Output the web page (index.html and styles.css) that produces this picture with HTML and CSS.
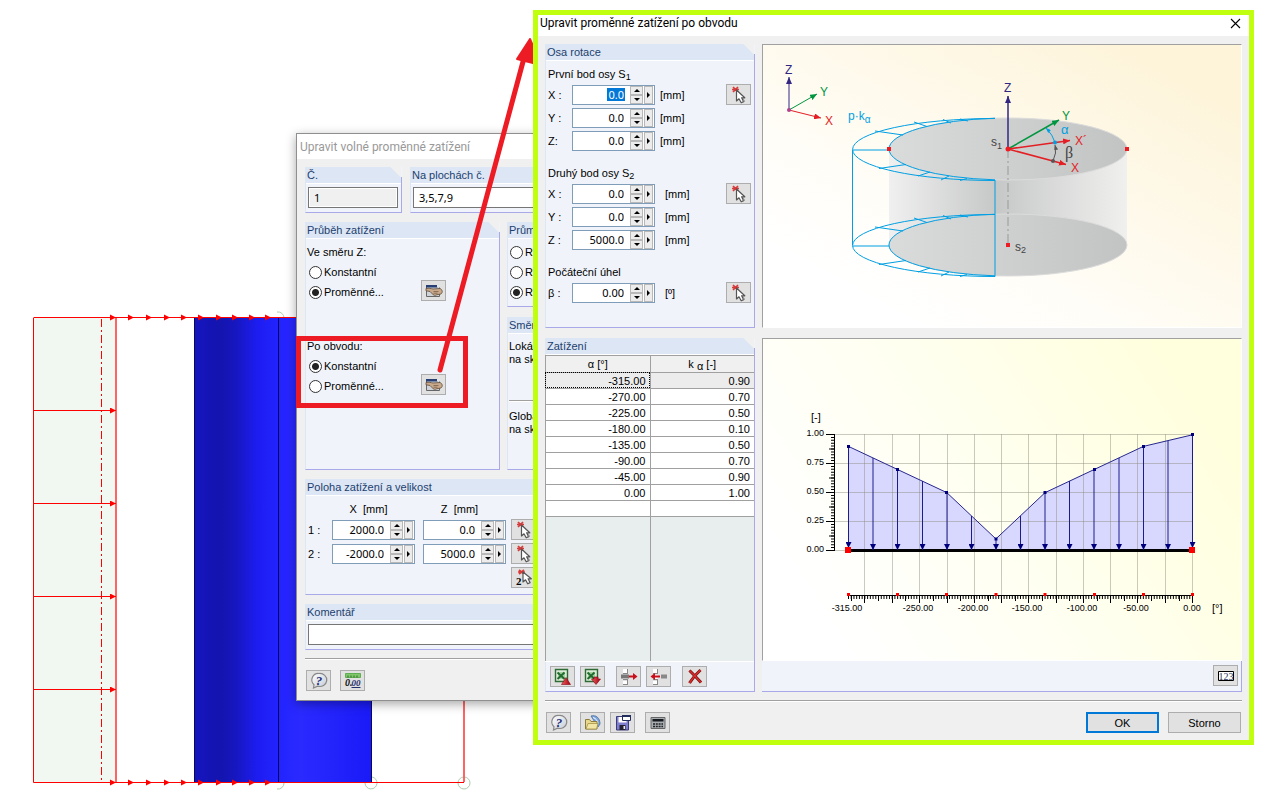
FILE: index.html
```html
<!DOCTYPE html>
<html lang="cs">
<head>
<meta charset="utf-8">
<title>Upravit proměnné zatížení po obvodu</title>
<link rel="stylesheet" href="styles.css">
</head>
<body>
<svg class="defs" aria-hidden="true">
  <defs>
    <linearGradient id="bubbleFill" x1="0" y1="0" x2="1" y2="1"><stop offset="0" stop-color="#fff"/><stop offset="1" stop-color="#c3cad6"/></linearGradient>
    <linearGradient id="redFill" x1="0" y1="0" x2="1" y2="0"><stop offset="0" stop-color="#f06060"/><stop offset="1" stop-color="#a00010"/></linearGradient>
    <symbol id="i-pick" viewBox="0 0 20 18">
      <path d="M4 1l5 5M9 1L4 6M3 3.500h7" stroke="#d83a3a" stroke-width="1.700" fill="none"/>
      <path d="M7.500 4v11l2.500-2.200 2.200 4 2.400-1.200-2-3.800h3.200z" fill="#fff" stroke="#555" stroke-width="1.200" stroke-linejoin="round"/>
      <path d="M14 12l2 3.200-1.500 1.300z" fill="#888"/>
    </symbol>
    <symbol id="i-pick2" viewBox="0 0 20 18">
      <path d="M5 1l5 4M10 1L5 5M4 3h7" stroke="#d83a3a" stroke-width="1.700" fill="none"/>
      <path d="M9 3v10l2.500-2.200 2.200 4 2.400-1.200-2-3.800h3.200z" fill="#fff" stroke="#555" stroke-width="1.200" stroke-linejoin="round"/>
      <text x="2" y="16" font-family="Liberation Serif, serif" font-weight="bold" font-size="11">2</text>
    </symbol>
    <symbol id="i-help" viewBox="0 0 20 18">
      <path d="M10 1.500a7 6.500 0 1 1-1.500 12.600L4.500 16l.5-3.200A6.500 6.500 0 0 1 10 1.500z" fill="url(#bubbleFill)" stroke="#888" stroke-width="1.200"/>
      <text x="10" y="12.500" text-anchor="middle" font-family="Liberation Serif, serif" font-style="italic" font-weight="bold" font-size="13" fill="#1c2f78">?</text>
    </symbol>
    <symbol id="i-hand" viewBox="0 0 20 18">
      <path d="M2.500 3.500h13v11h-13z" fill="#cdd3d8" stroke="#666"/><path d="M2 3h12v2.500H2z" fill="#273f73"/><path d="M13 3h3v2.500h-3z" fill="#e4e4e4"/>
      <path d="M2 6.500c3-.5 5 0 7 .5l7-.5c2.500 1 3 4 1 5.500l-4 .7c-2 1-3.600.8-4.500-.7L6 9.500 2 8.800z" fill="#c9a98b" stroke="#5f4a3a" stroke-width=".8"/>
      <path d="M9.500 9.500h5M9.500 11.200h4" stroke="#6e5643" stroke-width=".7"/>
    </symbol>
    <symbol id="i-units" viewBox="0 0 20 18">
      <path d="M2.500 1.500h15v4h-15z" fill="#7fc66a" stroke="#5fae52"/><path d="M5 3.500v2M8 3.500v2M11 3.500v2M14 3.500v2" stroke="#2e6b2a"/>
      <text x="2" y="14" font-family="Liberation Serif, serif" font-style="italic" font-weight="bold" font-size="10" fill="#111">0.</text>
      <text x="8.500" y="14" font-family="Liberation Serif, serif" font-style="italic" font-weight="bold" font-size="9" fill="#22306e">00</text>
      <path d="M8.500 15.500h9" stroke="#22306e"/>
    </symbol>
    <symbol id="i-excel" viewBox="0 0 20 18">
      <path d="M2.500 1.500h12v12h-12z" fill="#dcecd8" stroke="#2e6b36" stroke-width="1.400"/><path d="M5 4h7v7H5z" fill="#a7d0a0"/>
      <path d="M4.500 4.500l7 6.500M11.500 4.500l-7 6.500" stroke="#1f6d2e" stroke-width="2"/>
    </symbol>
    <symbol id="i-rows" viewBox="0 0 8 18"><path d="M1 1h4.500v4H1zM1 7h4.500v4H1zM1 13h4.500v4H1z" fill="#fff"/><path d="M1 5.500h5M5.500 1v4.500M1 11.500h5M1 16.500h5M5.500 12v5" stroke="#888" fill="none"/></symbol>
    <marker id="m-load" viewBox="0 0 6 6" refX="6" refY="3" markerWidth="6" markerHeight="6" markerUnits="userSpaceOnUse" orient="auto"><path d="M0 0l6 3-6 3z" fill="#f00"/></marker>
    <marker id="m-navy" viewBox="0 0 6 6" refX="6" refY="3" markerWidth="6" markerHeight="6" markerUnits="userSpaceOnUse" orient="auto"><path d="M0 0l6 3-6 3z" fill="#00007c"/></marker>
    <marker id="m-z" viewBox="0 0 7 6" refX="7" refY="3" markerWidth="7" markerHeight="6" markerUnits="userSpaceOnUse" orient="auto"><path d="M0 0l7 3-7 3z" fill="#312783"/></marker>
    <marker id="m-y" viewBox="0 0 7 6" refX="7" refY="3" markerWidth="7" markerHeight="6" markerUnits="userSpaceOnUse" orient="auto"><path d="M0 0l7 3-7 3z" fill="#009640"/></marker>
    <marker id="m-x" viewBox="0 0 7 6" refX="7" refY="3" markerWidth="7" markerHeight="6" markerUnits="userSpaceOnUse" orient="auto"><path d="M0 0l7 3-7 3z" fill="#e31e24"/></marker>
    <marker id="m-a" viewBox="0 0 5 4" refX="5" refY="2" markerWidth="5" markerHeight="4" markerUnits="userSpaceOnUse" orient="auto"><path d="M0 0l5 2-5 2z" fill="#009fe3"/></marker>
    <marker id="m-b" viewBox="0 0 5 4" refX="5" refY="2" markerWidth="5" markerHeight="4" markerUnits="userSpaceOnUse" orient="auto"><path d="M0 0l5 2-5 2z" fill="#555"/></marker>
  </defs>
</svg>

<main class="desktop">
  <svg class="model" viewBox="0 0 480 802" width="480" height="802" role="img" aria-label="Model válce se zatížením">
    <defs>
      <linearGradient id="cyl" x1="194" x2="372" y1="0" y2="0" gradientUnits="userSpaceOnUse">
        <stop offset="0" stop-color="#1515c0"/><stop offset=".15" stop-color="#1414ae"/><stop offset=".24" stop-color="#1717c2"/><stop offset=".36" stop-color="#1d1df2"/><stop offset=".48" stop-color="#2323ff"/><stop offset=".6" stop-color="#2a2aff"/><stop offset="1" stop-color="#1a1af8"/>
      </linearGradient>
    </defs>
    <path d="M34 318h82v464H34z" fill="#f0f8f1"/>
    <path d="M277 312a6 6 0 0 1 7 6M284 783a6 6 0 0 1-7 6" fill="none" stroke="#abcdaf"/>
    <path d="M194 318h178v464H194z" fill="url(#cyl)"/>
    <path d="M278.500 318v464M371.500 318v464M194.500 318v464" stroke="#0a0a50"/>
    <g fill="none" stroke="#abcdaf"><path d="M372 777a6 6 0 1 1-7 6"/><circle cx="464" cy="783" r="6"/></g>
    <path d="M101.500 319v463" stroke="#f00" stroke-dasharray="8 3 2 3"/>
    <path d="M33.500 318V782.500H464M33.500 317.500H300" fill="none" stroke="#f00"/>
    <path d="M116 318v464M464 700v82" stroke="#ff6464" stroke-width="2"/>
    <g stroke="#f00">
      <path d="M34 410.500h82" marker-end="url(#m-load)"/><path d="M34 503.500h82" marker-end="url(#m-load)"/><path d="M34 596.500h82" marker-end="url(#m-load)"/><path d="M34 689.500h82" marker-end="url(#m-load)"/>
    </g>
    <path d="M110 314.500l6 3-6 3zM128 314.500l6 3-6 3zM146 314.500l6 3-6 3zM164 314.500l6 3-6 3zM181 314.500l6 3-6 3zM198 314.500l6 3-6 3zM216 314.500l6 3-6 3zM232 314.500l6 3-6 3zM249 314.500l6 3-6 3zM265 314.500l6 3-6 3zM110 779.500l6 3-6 3zM128 779.500l6 3-6 3zM146 779.500l6 3-6 3zM164 779.500l6 3-6 3zM181 779.500l6 3-6 3zM198 779.500l6 3-6 3zM216 779.500l6 3-6 3zM232 779.500l6 3-6 3zM249 779.500l6 3-6 3zM265 779.500l6 3-6 3z" fill="#f00"/>
  </svg>

  <section class="window back" aria-label="Upravit volné proměnné zatížení">
    <header class="titlebar muted">Upravit volné proměnné zatížení</header>
    <div class="back-body">
      <div class="row-top">
        <section class="group">
          <h2 class="ghead cut"><label for="num">Č.</label></h2>
          <div class="gbody tight"><input class="text" id="num" value="1" readonly></div>
        </section>
        <section class="group">
          <h2 class="ghead"><label for="faces">Na plochách č.</label></h2>
          <div class="gbody tight"><input class="text" id="faces" value="3,5,7,9"></div>
        </section>
      </div>
      <div class="row-mid">
        <section class="group">
          <h2 class="ghead cut">Průběh zatížení</h2>
          <div class="gbody course">
            <fieldset class="choice">
              <legend>Ve směru Z:</legend>
              <div class="opts">
                <label><input type="radio" name="z">Konstantní</label>
                <label><input type="radio" name="z" checked>Proměnné...</label>
              </div>
              <button class="ib" aria-label="Upravit"><svg><use href="#i-hand"/></svg></button>
            </fieldset>
            <fieldset class="choice">
              <legend>Po obvodu:</legend>
              <div class="opts">
                <label><input type="radio" name="o" checked>Konstantní</label>
                <label><input type="radio" name="o">Proměnné...</label>
              </div>
              <button class="ib" aria-label="Upravit"><svg><use href="#i-hand"/></svg></button>
            </fieldset>
          </div>
        </section>
        <div class="mid-right">
          <section class="group">
            <h2 class="ghead">Průměr</h2>
            <div class="gbody radios3">
              <label><input type="radio" name="p">Ro</label>
              <label><input type="radio" name="p">Ro</label>
              <label><input type="radio" name="p" checked>Ro</label>
            </div>
          </section>
          <section class="group">
            <h2 class="ghead">Směr</h2>
            <div class="gbody dirs">
              <p>Lokálně<br>na skut.</p>
              <hr>
              <p>Globálně<br>na skut.</p>
            </div>
          </section>
        </div>
      </div>
      <section class="group">
        <h2 class="ghead">Poloha zatížení a velikost</h2>
        <div class="gbody pos">
          <span></span><span class="colh">X&nbsp; [mm]</span><span class="colh">Z&nbsp; [mm]</span><span></span>
          <span>1 :</span>
          <div class="spin"><input aria-label="X 1" value="2000.0"><div class="ud"><button aria-label="Zvýšit"><i class="up"></i></button><button aria-label="Snížit"><i class="dn"></i></button></div><button class="more" aria-label="Další"><i class="rt"></i></button></div>
          <div class="spin"><input aria-label="Z 1" value="0.0"><div class="ud"><button aria-label="Zvýšit"><i class="up"></i></button><button aria-label="Snížit"><i class="dn"></i></button></div><button class="more" aria-label="Další"><i class="rt"></i></button></div>
          <button class="ib" aria-label="Vybrat bod 1"><svg><use href="#i-pick"/></svg></button>
          <span>2 :</span>
          <div class="spin"><input aria-label="X 2" value="-2000.0"><div class="ud"><button aria-label="Zvýšit"><i class="up"></i></button><button aria-label="Snížit"><i class="dn"></i></button></div><button class="more" aria-label="Další"><i class="rt"></i></button></div>
          <div class="spin"><input aria-label="Z 2" value="5000.0"><div class="ud"><button aria-label="Zvýšit"><i class="up"></i></button><button aria-label="Snížit"><i class="dn"></i></button></div><button class="more" aria-label="Další"><i class="rt"></i></button></div>
          <button class="ib" aria-label="Vybrat bod 2"><svg><use href="#i-pick"/></svg></button>
          <button class="ib last" aria-label="Vybrat dva body"><svg><use href="#i-pick2"/></svg></button>
        </div>
      </section>
      <section class="group">
        <h2 class="ghead"><label for="note">Komentář</label></h2>
        <div class="gbody tight"><input class="text" id="note"></div>
      </section>
    </div>
    <footer class="foot back-foot">
      <button class="ib" aria-label="Nápověda"><svg><use href="#i-help"/></svg></button>
      <button class="ib" aria-label="Jednotky"><svg><use href="#i-units"/></svg></button>
    </footer>
  </section>

  <svg class="callout" viewBox="0 0 560 420" width="560" height="420" aria-hidden="true">
    <path d="M298.500 338.500h167v67h-167z" fill="none" stroke="#ed1c24" stroke-width="5"/>
    <path d="M440 370L524 58" stroke="#ed1c24" stroke-width="5" stroke-linecap="round"/>
    <path d="M530 39L517 59l24 6z" fill="#ed1c24" stroke="#ed1c24" stroke-width="2" stroke-linejoin="round"/>
  </svg>

  <section class="window front" aria-label="Upravit proměnné zatížení po obvodu">
    <header class="titlebar">Upravit proměnné zatížení po obvodu
      <button class="close" aria-label="Zavřít"><svg viewBox="0 0 11 11"><path d="M1 1l9 9M10 1l-9 9" stroke="#000" stroke-width="1.100"/></svg></button>
    </header>
    <div class="front-body">
      <section class="group">
        <h2 class="ghead cut">Osa rotace</h2>
        <div class="gbody axis">
          <h3>První bod osy S<sub>1</sub></h3>
          <div class="point">
            <label for="x1">X :</label>
            <div class="spin selected"><input id="x1" value="0.0"><div class="ud"><button aria-label="Zvýšit"><i class="up"></i></button><button aria-label="Snížit"><i class="dn"></i></button></div><button class="more" aria-label="Další"><i class="rt"></i></button></div>
            <span class="unit">[mm]</span>
            <button class="ib" aria-label="Vybrat první bod"><svg><use href="#i-pick"/></svg></button>
            <label for="y1">Y :</label>
            <div class="spin"><input id="y1" value="0.0"><div class="ud"><button aria-label="Zvýšit"><i class="up"></i></button><button aria-label="Snížit"><i class="dn"></i></button></div><button class="more" aria-label="Další"><i class="rt"></i></button></div>
            <span class="unit span2">[mm]</span>
            <label for="z1">Z:</label>
            <div class="spin"><input id="z1" value="0.0"><div class="ud"><button aria-label="Zvýšit"><i class="up"></i></button><button aria-label="Snížit"><i class="dn"></i></button></div><button class="more" aria-label="Další"><i class="rt"></i></button></div>
            <span class="unit span2">[mm]</span>
          </div>
          <h3>Druhý bod osy S<sub>2</sub></h3>
          <div class="point wide">
            <label for="x2">X :</label>
            <div class="spin"><input id="x2" value="0.0"><div class="ud"><button aria-label="Zvýšit"><i class="up"></i></button><button aria-label="Snížit"><i class="dn"></i></button></div><button class="more" aria-label="Další"><i class="rt"></i></button></div>
            <span class="unit">[mm]</span>
            <button class="ib" aria-label="Vybrat druhý bod"><svg><use href="#i-pick"/></svg></button>
            <label for="y2">Y :</label>
            <div class="spin"><input id="y2" value="0.0"><div class="ud"><button aria-label="Zvýšit"><i class="up"></i></button><button aria-label="Snížit"><i class="dn"></i></button></div><button class="more" aria-label="Další"><i class="rt"></i></button></div>
            <span class="unit span2">[mm]</span>
            <label for="z2">Z :</label>
            <div class="spin"><input id="z2" value="5000.0"><div class="ud"><button aria-label="Zvýšit"><i class="up"></i></button><button aria-label="Snížit"><i class="dn"></i></button></div><button class="more" aria-label="Další"><i class="rt"></i></button></div>
            <span class="unit span2">[mm]</span>
          </div>
          <h3>Počáteční úhel</h3>
          <div class="point wide">
            <label for="beta">β :</label>
            <div class="spin"><input id="beta" value="0.00"><div class="ud"><button aria-label="Zvýšit"><i class="up"></i></button><button aria-label="Snížit"><i class="dn"></i></button></div><button class="more" aria-label="Další"><i class="rt"></i></button></div>
            <span class="unit">[º]</span>
            <button class="ib" aria-label="Vybrat úhel"><svg><use href="#i-pick"/></svg></button>
          </div>
        </div>
      </section>

      <figure class="picture">
        <svg viewBox="763 45 478 282" role="img" aria-label="Schéma zatížení válce">
          <defs>
            <linearGradient id="bgA" x1=".15" y1=".85" x2=".85" y2=".1"><stop offset="0" stop-color="#fff"/><stop offset=".3" stop-color="#fffdf7"/><stop offset="1" stop-color="#fdf4da"/></linearGradient>
            <linearGradient id="disc"><stop offset="0" stop-color="#dadbdb"/><stop offset="1" stop-color="#c2c3c3"/></linearGradient>
            <linearGradient id="wall"><stop offset="0" stop-color="#f0f0f0"/><stop offset=".45" stop-color="#c6c7c7"/><stop offset=".6" stop-color="#d2d3d3"/><stop offset="1" stop-color="#f0f0ee"/></linearGradient>
            <g id="hatch" fill="none" stroke="#009fe3">
              <path d="M995 118.500A142.500 31 0 0 0 995 180.500M995 118.200A119 31 0 0 0 889 149A119 31 0 0 0 995 179.800M852.500 150H889M875 131l28 4M914 122l13 4.500M943 119.500l8 3.500M960 119l8 2M879 168.500l27-4M918 176l12-4M941 180l8-4M960 180.500l7-2"/>
            </g>
          </defs>
          <path d="M763 45h478v282H763z" fill="url(#bgA)"/>
          <path d="M889 149h238v96H889z" fill="url(#wall)"/>
          <ellipse cx="1008" cy="245" rx="119" ry="31" fill="url(#disc)" stroke="#dcdcdc"/>
          <ellipse cx="1008" cy="149" rx="119" ry="31" fill="url(#disc)" stroke="#dcdcdc"/>
          <use href="#hatch"/><use href="#hatch" y="96"/>
          <path d="M852.500 150v95M995 180v96.500" stroke="#009fe3"/>
          <path d="M1008 149v96" stroke="#999" stroke-dasharray="9 3 2 3"/>
          <path d="M887 147h4v4h-4zM1125 147h4v4h-4zM1006 243h4v4h-4z" fill="#ed1c24"/>
          <path d="M789 110V77" stroke="#312783" marker-end="url(#m-z)"/>
          <path d="M789 110l28-16" stroke="#009640" marker-end="url(#m-y)"/>
          <path d="M789 110l32 8" stroke="#e31e24" marker-end="url(#m-x)"/>
          <circle cx="789" cy="110" r="2" fill="#b0408c"/>
          <path d="M1008 149V96" stroke="#312783" stroke-width="1.500" marker-end="url(#m-z)"/>
          <path d="M1008 149l51-29" stroke="#009640" stroke-width="1.500" marker-end="url(#m-y)"/>
          <path d="M1008 149l62-8.500" stroke="#e31e24" stroke-width="1.500" marker-end="url(#m-x)"/>
          <path d="M1008 149l58 15.500" stroke="#e31e24" stroke-width="1.500" marker-end="url(#m-x)"/>
          <path d="M1055 142.500Q1053 135 1046 128" fill="none" stroke="#009fe3" marker-end="url(#m-a)"/><circle cx="1055" cy="142.500" r="2" fill="#009fe3"/>
          <path d="M1053 161Q1057 153 1055 145" fill="none" stroke="#555" marker-end="url(#m-b)"/><circle cx="1053" cy="161" r="2" fill="#555"/>
          <circle cx="1008" cy="149" r="2.500" fill="#ed1c24"/>
          <g class="diagram-text">
            <g fill="#312783"><text x="785" y="74">Z</text><text x="1004" y="92">Z</text></g>
            <g fill="#009640"><text x="820" y="96">Y</text><text x="1062" y="120">Y</text></g>
            <g fill="#e31e24"><text x="825" y="125">X</text><text x="1075" y="145">X´</text><text x="1071" y="172">X</text></g>
            <text x="848" y="120" fill="#009fe3">p·k<tspan dy="3" font-size="10">α</tspan></text>
            <text x="1061" y="134" fill="#009fe3" class="alpha">α</text><text x="1065" y="158" fill="#444" class="beta">β</text>
            <g fill="#444"><text x="991" y="146">s<tspan dy="3" font-size="9">1</tspan></text><text x="1015" y="251">s<tspan dy="2" font-size="9">2</tspan></text></g>
          </g>
        </svg>
      </figure>

      <section class="group loads">
        <h2 class="ghead cut">Zatížení</h2>
        <table class="grid">
          <thead><tr><th>α [°]</th><th>k <sub>α</sub> [-]</th></tr></thead>
          <tbody>
            <tr class="current"><td>-315.00</td><td>0.90</td></tr>
            <tr><td>-270.00</td><td>0.70</td></tr>
            <tr><td>-225.00</td><td>0.50</td></tr>
            <tr><td>-180.00</td><td>0.10</td></tr>
            <tr><td>-135.00</td><td>0.50</td></tr>
            <tr><td>-90.00</td><td>0.70</td></tr>
            <tr><td>-45.00</td><td>0.90</td></tr>
            <tr><td>0.00</td><td>1.00</td></tr>
            <tr><td></td><td></td></tr>
            <tr class="rest"><td></td><td></td></tr>
          </tbody>
        </table>
        <div class="tools">
          <button class="ib" aria-label="Export do Excelu"><svg viewBox="0 0 20 18"><use href="#i-excel" width="20" height="18"/><path d="M8.500 16.500L13 9.500l4.500 7z" fill="url(#redFill)" stroke="#8c0010" stroke-width=".6"/></svg></button>
          <button class="ib" aria-label="Import z Excelu"><svg viewBox="0 0 20 18"><use href="#i-excel" width="20" height="18"/><path d="M8.500 11h2.500V9h4v2h2.500L13 16.500z" fill="url(#redFill)" stroke="#8c0010" stroke-width=".6"/></svg></button>
          <button class="ib gap" aria-label="Vložit řádek"><svg viewBox="0 0 20 18"><use href="#i-rows" x="3" width="8" height="18"/><path d="M2 6.500h8v4H2z" fill="#777"/><path d="M10 8.500h6" stroke="#c8101c" stroke-width="2"/><path d="M14 5l4.500 3.500L14 12z" fill="#c8101c"/></svg></button>
          <button class="ib" aria-label="Odstranit řádek"><svg viewBox="0 0 20 18"><use href="#i-rows" x="3" width="8" height="18"/><path d="M12 6.500h6v4h-6z" fill="#888"/><path d="M4 8.500h7" stroke="#c8101c" stroke-width="2"/><path d="M6 5L1.500 8.500 6 12z" fill="#c8101c"/></svg></button>
          <button class="ib gap" aria-label="Smazat vše"><svg viewBox="0 0 20 18"><path d="M4.500 2.500C8 6 12 10 16 14.500M15.500 2C11 6 7.500 10 4.500 15" fill="none" stroke="#6c1212" stroke-width="3"/><path d="M4.500 2.500C8 6 12 10 16 14.500M15.500 2C11 6 7.500 10 4.500 15" fill="none" stroke="#e02a2a" stroke-width="1.600"/></svg></button>
        </div>
      </section>

      <section class="chart-panel">
        <figure class="picture">
          <svg viewBox="763 339 478 321" role="img" aria-label="Průběh součinitele zatížení">
            <defs><linearGradient id="bgB" x1=".05" y1=".7" x2=".95" y2=".3"><stop offset="0" stop-color="#fff"/><stop offset=".5" stop-color="#fffff0"/><stop offset="1" stop-color="#ffffde"/></linearGradient></defs>
            <path d="M763 339h478v321H763z" fill="url(#bgB)"/>
            <path d="M848.500 446.400L897.600 469.500 946.800 492.600 995.900 538.900 1045.100 492.600 1094.200 469.500 1143.400 446.400 1192.500 434.800V550H848.500z" fill="#d8d8ff"/>
            <path d="M835 434.500h357M835 463.500h357M835 492.500h357M835 521.500h357M835 550.500h357M864.500 434v161M892.500 434v161M919.500 434v161M947.500 434v161M974.500 434v161M1001.500 434v161M1028.500 434v161M1056.500 434v161M1083.500 434v161M1110.500 434v161M1137.500 434v161M1165.500 434v161M1192.500 434v161" stroke="#8a8a7a" stroke-opacity=".45"/>
            <path d="M848.500 446.400L897.600 469.500 946.800 492.600 995.900 538.900 1045.100 492.600 1094.200 469.500 1143.400 446.400 1192.500 434.800" fill="none" stroke="#26268c"/>
            <path d="M848.500 550.500h344" stroke="#000" stroke-width="3"/>
            <g stroke="#1c1c8c">
              <path d="M848.500 446V548" marker-end="url(#m-navy)"/><path d="M873 458v92" marker-end="url(#m-navy)"/><path d="M897.500 470v80" marker-end="url(#m-navy)"/><path d="M922.500 481v69" marker-end="url(#m-navy)"/><path d="M947 493v57" marker-end="url(#m-navy)"/><path d="M971.500 516v34" marker-end="url(#m-navy)"/><path d="M996 539v11" marker-end="url(#m-navy)"/><path d="M1020.500 516v34" marker-end="url(#m-navy)"/><path d="M1045 493v57" marker-end="url(#m-navy)"/><path d="M1069.500 481v69" marker-end="url(#m-navy)"/><path d="M1094 470v80" marker-end="url(#m-navy)"/><path d="M1119 458v92" marker-end="url(#m-navy)"/><path d="M1143.500 446v104" marker-end="url(#m-navy)"/><path d="M1168 441v109" marker-end="url(#m-navy)"/><path d="M1192.500 435v113" marker-end="url(#m-navy)"/>
            </g>
            <path d="M847 445h3v3h-3zM896 468h3v3h-3zM945 491h3v3h-3zM994.500 537.500h3v3h-3zM1043.500 491h3v3h-3zM1093 468h3v3h-3zM1142 445h3v3h-3zM1191 433h3v3h-3z" fill="#00007c"/>
            <path d="M845 547h6v6h-6zM1189 547h6v6h-6z" fill="#f00"/>
            <path d="M834.500 434v117M826 434.500h8M826 463.500h8M826 492.500h8M826 521.500h8M826 550.500h8M829 449h5M829 478h5M829 507h5M829 536h5" stroke="#000"/>
            <path d="M832.500 434v117" stroke="#000" stroke-width="3" stroke-dasharray="1 1.900"/>
            <path d="M848 595.500h345M864.500 595v8M892.500 595v8M919.500 595v8M947.500 595v8M974.500 595v8M1001.500 595v8M1028.500 595v8M1056.500 595v8M1083.500 595v8M1110.500 595v8M1137.500 595v8M1165.500 595v8M1192.500 595v8M851.500 595v6M878.500 595v6M905.500 595v6M933.500 595v6M960.500 595v6M988.500 595v6M1015.500 595v6M1042.500 595v6M1069.500 595v6M1097.500 595v6M1124.500 595v6M1151.500 595v6M1179.500 595v6" stroke="#000"/>
            <path d="M848 597.500h345" stroke="#000" stroke-width="3" stroke-dasharray="1 1.730"/>
            <path d="M847 593h3v3h-3zM896 593h3v3h-3zM945 593h3v3h-3zM994.500 593h3v3h-3zM1043.500 593h3v3h-3zM1093 593h3v3h-3zM1142 593h3v3h-3zM1191 593h3v3h-3z" fill="#f00"/>
            <g class="chart-text">
              <text x="811" y="421" font-size="11">[-]</text>
              <g text-anchor="end"><text x="824" y="436">1.00</text><text x="824" y="465">0.75</text><text x="824" y="494">0.50</text><text x="824" y="523">0.25</text><text x="824" y="552">0.00</text></g>
              <g text-anchor="middle"><text x="847" y="611">-315.00</text><text x="918" y="611">-250.00</text><text x="973" y="611">-200.00</text><text x="1027" y="611">-150.00</text><text x="1082" y="611">-100.00</text><text x="1136" y="611">-50.00</text><text x="1192" y="611">0.00</text></g>
              <text x="1212" y="612" font-size="11">[°]</text>
            </g>
          </svg>
        </figure>
        <div class="tools end">
          <button class="ib" aria-label="Číselné hodnoty"><svg viewBox="0 0 20 18"><path d="M2.500 4.500h15v9h-15z" fill="#fff" stroke="#000"/><text x="10" y="12.500" text-anchor="middle" font-family="Liberation Serif, serif" font-size="10" fill="#2a3560">123</text></svg></button>
        </div>
      </section>
    </div>
    <footer class="foot front-foot">
      <button class="ib" aria-label="Nápověda"><svg><use href="#i-help"/></svg></button>
      <button class="ib" aria-label="Otevřít"><svg viewBox="0 0 20 18"><path d="M8 2c5-1.500 9 2 9 8l-2 3z" fill="#7ba5dc" stroke="#4a6a9c" stroke-width=".8"/><path d="M10 3.500c3 1 4.500 3 5 6" stroke="#fff" fill="none"/><path d="M2.500 5.500h4l1.500 2h6v7.500h-11.500z" fill="#e8d98c" stroke="#8d7c3a"/><path d="M3 15l2-5.500h10L13.500 15z" fill="#f2e6a6" stroke="#a39248" stroke-width=".8"/></svg></button>
      <button class="ib" aria-label="Uložit"><svg viewBox="0 0 20 18"><path d="M3.500 2.500h12v13.500h-12z" fill="#7f7fcf" stroke="#3c3c78"/><path d="M5.500 3h8v5.500h-8z" fill="#fff"/><path d="M6.500 11h6v5h-6z" fill="#223"/><path d="M10.500 12h1.500v3h-1.500z" fill="#eee"/><path d="M9.500 1.500h8v5h-8z" fill="#fff" stroke="#222e5c"/><path d="M9 1h9v2H9z" fill="#222e5c"/></svg></button>
      <button class="ib wider" aria-label="Kalkulačka"><svg viewBox="0 0 20 18"><path d="M3 3.500h14v11H3z" fill="#a9aeb3" stroke="#666"/><path d="M4.500 5h11v2.500h-11z" fill="#15181c"/><path d="M5 10h10M5 12.500h10" stroke="#222" stroke-width="1.600" stroke-dasharray="2 .8"/></svg></button>
      <span class="fill"></span>
      <button class="push primary">OK</button>
      <button class="push">Storno</button>
    </footer>
  </section>
</main>
</body>
</html>
```
FILE: styles.css
```css
* { box-sizing: border-box; }
body {
  margin: 0;
  background: #fff;
  color: #000;
  font: 11px/14px "Liberation Sans", Arial, sans-serif;
}
h2, h3, p, figure, fieldset, legend { margin: 0; padding: 0; border: 0; font: inherit; }
button, input { font: inherit; color: inherit; margin: 0; padding: 0; border-radius: 0; }
.defs { position: absolute; width: 0; height: 0; }

.desktop { position: relative; min-height: 100vh; overflow: hidden; }
.model, .callout { position: absolute; top: 0; left: 0; display: block; }

.window { position: absolute; background: #f0f0f0; }
.back {
  top: 133px;
  left: 296px;
  width: 420px;
  border: 1px solid #8f8f8f;
  box-shadow: 0 3px 10px rgba(0, 0, 0, .35);
}
.front { top: 10px; left: 533px; right: 12px; border: 5px solid #c0ff0d; }

.titlebar {
  display: flex;
  justify-content: space-between;
  align-items: center;
  height: 25px;
  padding: 0 3px;
  background: #fff;
  font: 12px/16px Roboto, "Open Sans", sans-serif;
}
.front .titlebar { height: 21px; padding: 0 8px 5px 2px; }
.muted { color: #999; }
.close { width: 11px; height: 11px; border: 0; background: none; }
.close svg { display: block; width: 11px; height: 11px; }

/* group boxes */
.group {
  display: flex;
  flex-direction: column;
  background: linear-gradient(#a9a9ea, #a9a9ea) right 0 top 10px / 1px 100% no-repeat, #f0f4fa;
  border-left: 1px solid #dce6f5;
  border-bottom: 1px solid #a9a9ea;
}
.ghead {
  height: 17px;
  padding: 1px 1px 0;
  background: #dce6f5;
  border-bottom: 1px solid #fff;
  color: #1c3f6e;
  line-height: 15px;
}
.ghead.cut { background: linear-gradient(225deg, #f0f0f0 7px, #dce6f5 8px); margin-right: 1px; }
.gbody { flex: 1; }
.tight { padding: 3px 4px 4px 2px; }
.text {
  display: block;
  width: 100%;
  height: 21px;
  padding: 0 5px;
  border: 1px solid #767676;
  background: #fff;
  font-family: "Noto Sans", sans-serif;
}
.text[readonly] { background: #f0f0f0; box-shadow: inset 0 0 0 1px #fff; }

/* rear window */
.back-body { display: grid; gap: 9px; padding: 8px; }
.row-top { display: grid; grid-template-columns: 97px 1fr; gap: 8px; }
.row-mid { display: grid; grid-template-columns: 195px 1fr; gap: 7px; }
.mid-right { display: grid; grid-template-rows: 85px 1fr; gap: 10px; }
.course { display: grid; align-content: start; gap: 37px; padding: 6px 1px 73px; }
.choice { display: grid; grid-template-columns: 114px 25px; row-gap: 3px; min-height: 57px; }
.choice legend { grid-column: 1 / -1; float: left; }
.choice .ib { align-self: end; margin-bottom: 1px; }
.opts { display: grid; }
.opts label, .radios3 label { display: flex; align-items: center; height: 20px; gap: 2px; }
.opts label { padding-left: 2px; }
input[type="radio"] {
  appearance: none;
  width: 13px;
  height: 13px;
  border: 1px solid #333;
  border-radius: 50%;
  background: #fff;
}
input[type="radio"]:checked { background: radial-gradient(circle, #222 0 3px, #fff 4px); }
.radios3 { padding: 3px 2px; }
.dirs { padding: 6px 1px; line-height: 13px; }
.dirs hr { margin: 34px 0 8px; border: 0; border-top: 1px solid #a0a0a0; border-bottom: 1px solid #fff; height: 2px; }

.pos {
  display: grid;
  grid-template-columns: 16px 83px 83px 25px;
  grid-template-rows: 14px 21px 21px 21px;
  gap: 3px 8px;
  align-items: center;
  padding: 6px 2px;
}
.pos .ib { margin-left: -3px; }
.pos .last { grid-column: 4; }
.colh { text-align: center; padding-right: 10px; }

/* numeric field */
.spin {
  display: flex;
  align-items: stretch;
  gap: 1px;
  width: 83px;
  height: 20px;
  padding-right: 1px;
  border: 1px solid #7f9db9;
  background: #fff;
}
.spin input {
  flex: 1;
  min-width: 0;
  border: 0;
  outline: 0;
  padding-right: 5px;
  background: none;
  text-align: right;
  font: 11px/14px "Noto Sans", sans-serif;
}
.spin.selected input { background: linear-gradient(#0078d7, #0078d7) right 4px center / 18px 13px no-repeat; color: #fff; }
.ud { display: grid; grid-template-rows: 1fr 1fr; width: 13px; }
.spin button {
  display: grid;
  place-content: center;
  min-height: 0;
  border: 1px solid #b8b8b8;
  background: #ececec;
}
.spin .more { width: 9px; }
.spin i { width: 0; height: 0; border: 3px solid transparent; }
.spin .up { border-top: 0; border-bottom: 3px solid #000; }
.spin .dn { border-bottom: 0; border-top: 3px solid #000; }
.spin .rt { border-right: 0; border-left: 3px solid #000; }

/* icon and push buttons */
.ib { display: grid; place-content: center; width: 25px; height: 21px; border: 1px solid #adadad; background: #e1e1e1; }
.ib svg { display: block; width: 20px; height: 18px; }
.push {
  width: 73px;
  height: 21px;
  border: 1px solid #adadad;
  background: #e1e1e1;
}
.primary { border: 2px solid #0078d7; }

.foot { display: flex; align-items: center; gap: 9px; border-top: 1px solid #a0a0a0; box-shadow: inset 0 1px #fff; }
.back-foot { margin: 0 8px; padding: 11px 1px 9px; }
.front-foot { margin: 0 7px; padding: 11px 1px 7px; }
.front-foot .ib + .ib + .ib { margin-left: -4px; }
.front-foot .ib + .ib + .wider { margin-left: 1px; }
.fill { flex: 1; }

/* front window */
.front-body { display: grid; grid-template-columns: 210px 1fr; gap: 10px 7px; padding: 8px 7px; }
.axis { padding: 6px 3px 0 2px; }
.axis h3 { height: 14px; margin-bottom: 3px; }
.axis sub { font-size: 9px; line-height: 9px; vertical-align: -2px; }
.point {
  display: grid;
  grid-template-columns: 24px 83px 1fr 25px;
  gap: 3px 0;
  align-items: center;
  margin-bottom: 15px;
}
.point .ib { margin-left: -1px; }
.span2 { grid-column: span 2; }
.unit { padding-left: 5px; }
.wide .unit { padding-left: 10px; }

.picture { border: 1px solid; border-color: #a0a0a0 #fff #fff #a0a0a0; }
.picture svg { display: block; width: 100%; height: auto; }
.diagram-text { font: 12px "Liberation Sans", Arial, sans-serif; }
.alpha { font-size: 13px; }
.beta { font: 16px "Liberation Serif", serif; }
.chart-text { font: 9px "Liberation Sans", Arial, sans-serif; }

.grid { flex: 1; width: 209px; margin-left: -1px; border-collapse: separate; border-spacing: 0; table-layout: fixed; background: #fff; border-bottom: 1px solid #fff; }
.grid th, .grid td { height: 16px; padding: 0 4px; border: solid #a0a0a0; border-width: 1px 0 0 1px; line-height: 14px; }
.grid th { height: 17px; background: #f0f0f0; font-weight: normal; text-align: center; }
.grid th sub { font-size: 11px; line-height: 9px; vertical-align: -2px; }
.grid td { text-align: right; }
.current td { background: #ececec; }
.current td:first-child { outline: 1px dotted #000; outline-offset: -1px; }
.grid .rest td { height: 145px; background: #e8eeee; }
.tools { display: flex; align-items: center; gap: 5px; height: 29px; padding: 0 4px; }
.tools .gap { margin-left: 6px; }
.chart-panel { display: flex; flex-direction: column; border-right: 1px solid #a9a9ea; border-bottom: 1px solid #a9a9ea; background: #f0f4fa; }
.chart-panel .picture { margin-right: -1px; }
.end { justify-content: flex-end; padding: 0 3px; }
```
